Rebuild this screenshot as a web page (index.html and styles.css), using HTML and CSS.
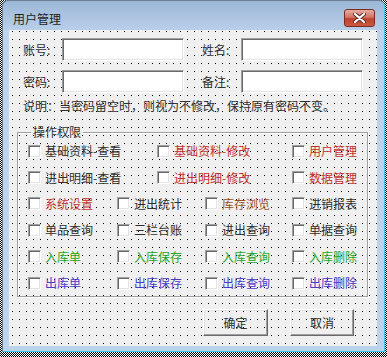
FILE: index.html
```html
<!DOCTYPE html>
<html>
  <head>
    <meta charset="UTF-8" />
    <title>用户管理</title>
    <link rel="stylesheet" href="styles.css">
  </head>

  <body>
    <div class="window">
      <div class="titlebar">
        <span class="title">用户管理</span>
        <span class="close">
          <svg width="13" height="10" viewBox="0 0 13 10">
            <path d="M2 1 L11 9 M11 1 L2 9" stroke="#5a2a22" stroke-width="4" stroke-linecap="round" />
            <path d="M2 1 L11 9 M11 1 L2 9" stroke="#fff" stroke-width="2.2" stroke-linecap="round" />
          </svg>
        </span>
      </div>

      <div class="client">
        <div class="fields">
          <div class="field">
            <span class="field-label">账号:</span>
            <div class="textbox"></div>
          </div>
          <div class="field">
            <span class="field-label">姓名:</span>
            <div class="textbox"></div>
          </div>
          <div class="field">
            <span class="field-label">密码:</span>
            <div class="textbox"></div>
          </div>
          <div class="field">
            <span class="field-label">备注:</span>
            <div class="textbox"></div>
          </div>
        </div>

        <div class="note">说明：当密码留空时，则视为不修改，保持原有密码不变。</div>

        <fieldset class="perms">
          <legend>操作权限</legend>

          <div class="row three">
            <label class="check"><span class="box"></span><span class="dark">基础资料-查看</span></label>
            <label class="check"><span class="box"></span><span class="red">基础资料-修改</span></label>
            <label class="check"><span class="box"></span><span class="red">用户管理</span></label>
          </div>
          <div class="row three">
            <label class="check"><span class="box"></span><span class="dark">进出明细-查看</span></label>
            <label class="check"><span class="box"></span><span class="red">进出明细-修改</span></label>
            <label class="check"><span class="box"></span><span class="red">数据管理</span></label>
          </div>
          <div class="row four">
            <label class="check"><span class="box"></span><span class="red">系统设置</span></label>
            <label class="check"><span class="box"></span><span class="dark">进出统计</span></label>
            <label class="check"><span class="box"></span><span class="brown">库存浏览</span></label>
            <label class="check"><span class="box"></span><span class="dark">进销报表</span></label>
          </div>
          <div class="row four">
            <label class="check"><span class="box"></span><span class="dark">单品查询</span></label>
            <label class="check"><span class="box"></span><span class="dark">三栏台账</span></label>
            <label class="check"><span class="box"></span><span class="dark">进出查询</span></label>
            <label class="check"><span class="box"></span><span class="dark">单据查询</span></label>
          </div>
          <div class="row four">
            <label class="check"><span class="box"></span><span class="green">入库单</span></label>
            <label class="check"><span class="box"></span><span class="green">入库保存</span></label>
            <label class="check"><span class="box"></span><span class="green">入库查询</span></label>
            <label class="check"><span class="box"></span><span class="green">入库删除</span></label>
          </div>
          <div class="row four">
            <label class="check"><span class="box"></span><span class="blue">出库单</span></label>
            <label class="check"><span class="box"></span><span class="blue">出库保存</span></label>
            <label class="check"><span class="box"></span><span class="blue">出库查询</span></label>
            <label class="check"><span class="box"></span><span class="blue">出库删除</span></label>
          </div>
        </fieldset>

        <div class="buttons">
          <div class="btn">确定</div>
          <div class="btn">取消</div>
        </div>
      </div>
    </div>
  </body>
</html>
```

FILE: styles.css
```css
body {
  margin: 0;
  width: 387px;
  height: 357px;
  overflow: hidden;
  font-family: "Noto Sans CJK SC", "Noto Sans", sans-serif;
  font-size: 12px;
  color: #2f2f2f;
  background: repeating-conic-gradient(#000 0 25%, #fff 0 50%) 0 0 / 2px 2px;
}

.window {
  margin-left: 2px;
  width: 370px;
  height: 346px;
  padding: 0 5px 4px 6px;
  border: 1px solid #3ac6e6;
  border-left-color: #6b7f96;
  border-top-color: #6b7f96;
  border-radius: 6px 6px 0 0;
  background: linear-gradient(#9cb7d7, #b8cfe9 29px, #bcd3ec 29px);
}

.titlebar {
  height: 29px;
  display: flex;
  justify-content: space-between;
  align-items: flex-start;
}

.title {
  margin-top: 11px;
  margin-left: 4px;
  line-height: 14px;
  font-size: 12px;
  color: #1e1e1e;
}

.close {
  margin-top: 8px;
  margin-right: 4px;
  width: 29px;
  height: 16px;
  display: flex;
  justify-content: center;
  align-items: center;
  border: 1px solid #7a2a22;
  border-radius: 3px;
  background: linear-gradient(#e6ada2, #d27565 45%, #c0402e 55%, #cc5a42);
}

.client {
  width: 368px;
  height: 316px;
  display: flex;
  flex-direction: column;
  background-color: #f0f0f0;
  background-image: conic-gradient(at 1px 1px, transparent 75%, #000 0);
  background-size: 7px 8px;
  background-position: 3px 1px;
}

.fields {
  margin: 8px 0 0 14px;
  display: grid;
  grid-template-columns: 161px 161px;
  column-gap: 18px;
  row-gap: 9px;
}

.field {
  display: flex;
  align-items: center;
}

.field-label {
  width: 39px;
  line-height: 16px;
}

.textbox,
.box {
  background: #fff;
  border: 1px solid;
  border-color: #a0a0a0 #fff #fff #a0a0a0;
  box-shadow: inset 1px 1px #696969, inset -1px -1px #e3e3e3;
}

.textbox {
  width: 120px;
  height: 21px;
}

.note {
  margin: 5px 0 0 14px;
  line-height: 16px;
}

.perms {
  margin: 12px 0 0 8px;
  width: 339px;
  padding: 0 0 0 10px;
  border: 1px solid #a0a0a0;
  box-shadow: inset 1px 1px #fff, 1px 1px #fff;
}

.perms legend {
  margin-left: 3px;
  padding: 0 2px;
  line-height: 12px;
  color: #2f2f2f;
}

.row {
  display: grid;
  height: 26.4px;
  align-items: center;
}

.three {
  grid-template-columns: 129px 135px auto;
}

.four {
  grid-template-columns: 89px 88px 87px auto;
}

.check {
  display: flex;
  align-items: center;
  gap: 4px;
  line-height: 16px;
  white-space: nowrap;
}

.box {
  width: 11px;
  height: 11px;
}

.dark { color: #2f2f2f; }
.red { color: #c0302e; }
.brown { color: #94501e; }
.green { color: #1fa51f; }
.blue { color: #4a38c4; }

.buttons {
  margin: 12px 23px 0 0;
  display: flex;
  justify-content: flex-end;
  gap: 22px;
}

.btn {
  width: 63px;
  height: 25px;
  display: flex;
  justify-content: center;
  align-items: center;
  border: 1px solid;
  border-color: #fff #696969 #696969 #fff;
  box-shadow: inset -1px -1px #a0a0a0, inset 1px 1px #e3e3e3;
  color: #2f2f2f;
}

.buttons .btn:last-child {
  width: 62px;
}
```
